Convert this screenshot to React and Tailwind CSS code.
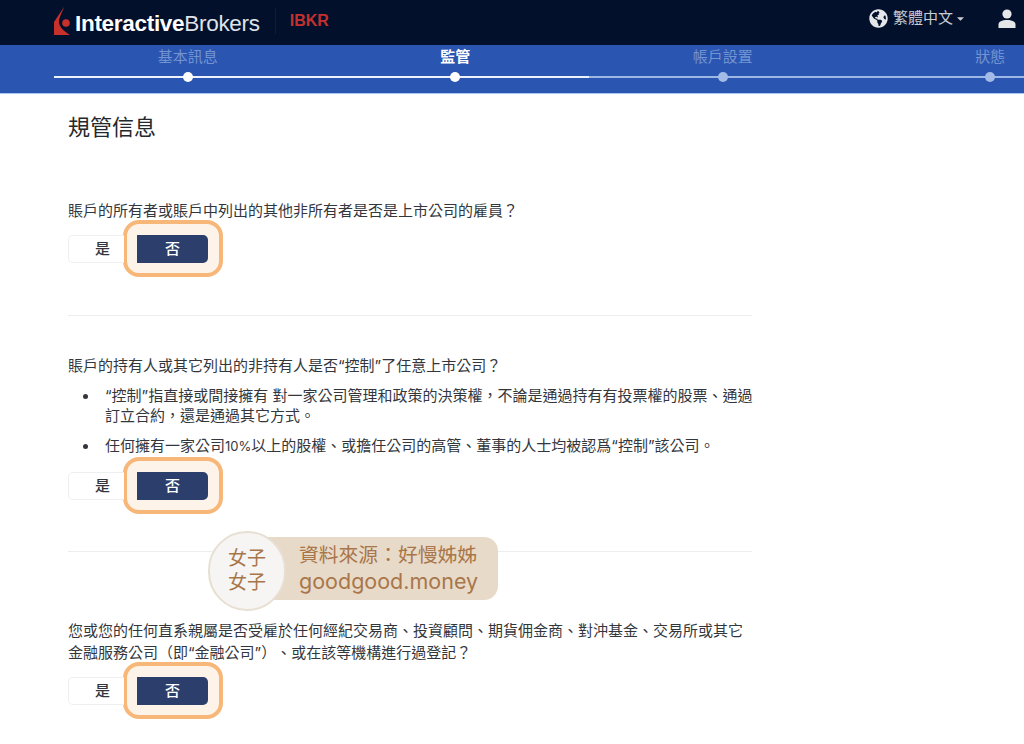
import React from 'react';
import { FaGlobeAmericas, FaCaretDown } from 'react-icons/fa';

const steps = [
  { label: '基本訊息', done: true },
  { label: '監管', done: true, active: true },
  { label: '帳戶設置' },
  { label: '狀態' },
];

const Logo = () => (
  <div className="flex items-center">
    <svg width="16" height="28" viewBox="0 0 16 28" className="mr-[5px] mt-[-3px]">
      <path d="M10 0 C8 6 5 10 5 15 C5 20 10 24 16 28 L0 28 L0 15 Z" fill="#c8302c" />
      <circle cx="12" cy="16" r="3.8" fill="#c8302c" />
    </svg>
    <span className="text-[22.5px] tracking-[-0.3px] text-white font-['Liberation_Sans',sans-serif] mt-[4px] leading-none">
      <span className="font-bold">Interactive</span>
      <span className="text-[#dfe3ea]">Brokers</span>
    </span>
    <div className="w-px h-[26px] bg-[#101d3a] ml-[15px] mr-[14px] mt-[-4px]"></div>
    <span className="text-[16px] font-bold text-[#c2302f] font-['Liberation_Sans',sans-serif] mt-[-3px]">IBKR</span>
  </div>
);

const UserIcon = () => (
  <svg width="18" height="20" viewBox="0 0 18 20" className="ml-[32px]">
    <circle cx="9" cy="5" r="4.6" fill="#e4e6ea" />
    <path d="M0.5 19 L0.5 15.5 C0.5 12.5 4 11 9 11 C14 11 17.5 12.5 17.5 15.5 L17.5 19 Z" fill="#e4e6ea" />
  </svg>
);

const YesNo = () => (
  <div className="relative flex w-[140px] h-[28px] text-[15px] font-medium">
    {/* orange highlight */}
    <div className="absolute left-[55px] top-[-15px] w-[100px] h-[57px] border-[4px] border-[#f7b779] rounded-[16px] bg-[#fdf3e8]"></div>
    <div className="relative w-[56px] mr-[13px] flex items-center justify-end pr-[14px] bg-white border border-r-0 border-[#eeeff1] rounded-l-[5px] text-[#33373d]">是</div>
    <div className="relative w-[71px] flex items-center justify-center bg-[#2c3e6b] rounded-r-[5px] text-white">否</div>
  </div>
);

const App = () => {
  return (
    <div className="relative w-[1024px] h-[744px] overflow-hidden bg-white text-[#33373d] font-['Inter','Noto_Sans_CJK_TC',sans-serif]">
      {/* Top bar */}
      <header className="h-[45px] bg-[#03102b] flex items-center justify-between pl-[54px]">
        <Logo />
        <div className="flex items-center w-[155px] shrink-0 text-[#c9ccd3] mt-[-8px]">
          <FaGlobeAmericas className="text-[19px] text-[#e4e6ea] mr-[5px]" />
          <span className="text-[15px]">繁體中文</span>
          <FaCaretDown className="text-[11px] ml-[2px]" />
          <UserIcon />
        </div>
      </header>

      {/* Stepper */}
      <div className="h-[49px] bg-[#2a55b0] border-b border-[#a9c9f2] flex pl-[54px]">
        {steps.map((s) => (
          <div key={s.label} className="w-[267.5px] shrink-0">
            <div className={`h-[24px] flex items-center justify-center text-[15px] ${s.active ? 'text-white font-bold' : 'text-[#7394d2]'}`}>
              {s.label}
            </div>
            <div className={`relative h-[2px] mt-[7px] ${s.done ? 'bg-[#eef3fb]' : 'bg-[#9db7e6]'}`}>
              <div className={`absolute left-1/2 top-1/2 -translate-x-1/2 -translate-y-1/2 w-[10px] h-[10px] rounded-full ${s.done ? 'bg-white' : 'bg-[#a3bbe6]'}`}></div>
            </div>
          </div>
        ))}
      </div>

      {/* Content */}
      <main className="w-[684px] ml-[68px] text-[15px]">
        <h1 className="text-[22px] leading-[30px] font-normal text-[#25282d] mt-[18px]">規管信息</h1>

        <p className="mt-[58px] leading-[22px]">賬戶的所有者或賬戶中列出的其他非所有者是否是上市公司的雇員？</p>
        <div className="mt-[13px]"><YesNo /></div>
        <hr className="mt-[52px] border-[#eceef0]" />

        <p className="mt-[39px] leading-[22px]">賬戶的持有人或其它列出的非持有人是否“控制”了任意上市公司？</p>
        <ul className="pl-[37px] mr-[-4px] mt-[9px] leading-[20px]">
          <li className="relative before:absolute before:left-[-22px] before:top-[8px] before:w-[5px] before:h-[5px] before:rounded-full before:bg-[#33373d]">“控制”指直接或間接擁有 對一家公司管理和政策的決策權，不論是通過持有有投票權的股票、通過訂立合約，還是通過其它方式。</li>
          <li className="relative mt-[10px] before:absolute before:left-[-22px] before:top-[8px] before:w-[5px] before:h-[5px] before:rounded-full before:bg-[#33373d]">任何擁有一家公司<span className="text-[13px]">10%</span>以上的股權、或擔任公司的高管、董事的人士均被認爲“控制”該公司。</li>
        </ul>
        <div className="mt-[16px]"><YesNo /></div>
        <hr className="mt-[51px] border-[#eceef0]" />

        <p className="mt-[68px] leading-[22px]">您或您的任何直系親屬是否受雇於任何經紀交易商、投資顧問、期貨佣金商、對沖基金、交易所或其它金融服務公司（即“金融公司”）&#8203;、或在該等機構進行過登記？</p>
        <div className="mt-[13px]"><YesNo /></div>
      </main>

      {/* Watermark */}
      <div className="absolute left-[208px] top-[531px] w-[290px] h-[80px] flex items-center">
        <div className="absolute left-[24px] top-[6px] w-[266px] h-[63px] rounded-[14px] bg-[#e8dac8]"></div>
        <div className="relative w-[78px] h-[80px] rounded-full bg-[#f6f5f3] border-[2px] border-[#e8dfd3] flex flex-col items-center justify-center text-[19px] leading-[24px] text-[#a8764a]">
          <div>女子</div>
          <div>女子</div>
        </div>
        <div className="relative ml-[13px] -mt-[6px] text-[#a8764a] leading-[26px]">
          <div className="text-[19.8px]">資料來源：好慢姊姊</div>
          <div className="text-[21.5px]">goodgood.money</div>
        </div>
      </div>
    </div>
  );
};

export default App;
